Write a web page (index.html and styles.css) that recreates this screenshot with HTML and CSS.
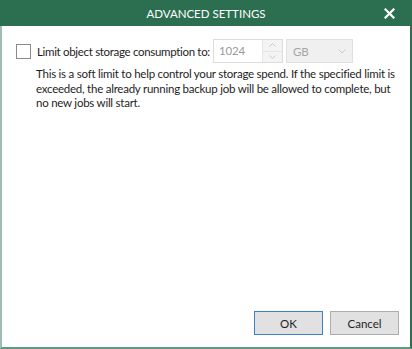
FILE: index.html
```html
<!DOCTYPE html>
<html>
<head>
<meta charset="utf-8">
<link rel="stylesheet" href="styles.css">
</head>
<body>
<div class="window">
  <div class="titlebar">
    <span class="title">ADVANCED SETTINGS</span>
    <span class="close">
      <svg width="11" height="11" viewBox="0 0 11 11"><path d="M1.5 1.5 L9.5 9.5 M9.5 1.5 L1.5 9.5" stroke="#fff" stroke-width="2.2" stroke-linecap="square"/></svg>
    </span>
  </div>
  <div class="content">
    <div class="row">
      <span class="checkbox"></span>
      <span class="label">Limit object storage consumption to:</span>
      <div class="spin">
        <span class="spin-value">1024</span>
        <span class="spin-btns">
          <span class="spin-btn"><svg width="7" height="4" viewBox="0 0 7 4"><path d="M0.5 3.5 L3.5 0.5 L6.5 3.5" fill="none" stroke="#c9c9c9" stroke-width="1"/></svg></span>
          <span class="spin-btn"><svg width="7" height="4" viewBox="0 0 7 4"><path d="M0.5 0.5 L3.5 3.5 L6.5 0.5" fill="none" stroke="#c9c9c9" stroke-width="1"/></svg></span>
        </span>
      </div>
      <div class="select">
        <span>GB</span>
        <svg width="8" height="5" viewBox="0 0 8 5"><path d="M0.5 0.5 L4 4 L7.5 0.5" fill="none" stroke="#c9c9c9" stroke-width="1"/></svg>
      </div>
    </div>
    <p class="desc">This is a soft limit to help control your storage spend. If the specified limit is exceeded, the already running backup job will be allowed to complete, but no new jobs will start.</p>
  </div>
  <div class="footer">
    <button class="btn primary">OK</button>
    <button class="btn">Cancel</button>
  </div>
</div>
</body>
</html>
```
FILE: styles.css
```css
html, body {
  margin: 0;
  padding: 0;
  background: #ffffff;
}
body {
  font-family: Lato, "Noto Sans", sans-serif;
  font-size: 11.5px;
  letter-spacing: -0.2px;
  color: #1e1e1e;
}
.window {
  width: 412px;
  height: 349px;
  box-sizing: border-box;
  border-left: 2px solid #9dbfb0;
  border-right: 2px solid #2e6f52;
  border-bottom: 2px solid #5f9980;
  display: flex;
  flex-direction: column;
  background: #fff;
}
.titlebar {
  height: 26px;
  margin-left: -2px;
  margin-right: -2px;
  background: #2b6e50;
  color: #fff;
  display: flex;
  align-items: center;
  justify-content: center;
  position: relative;
}
.title {
  font-size: 11.5px;
  letter-spacing: 0;
}
.close {
  position: absolute;
  right: 17px;
  top: 8px;
  width: 11px;
  height: 11px;
  display: flex;
}
.content {
  flex: 1;
  padding: 13px 0 0 14px;
}
.row {
  display: flex;
  align-items: center;
  height: 24px;
}
.checkbox {
  width: 13px;
  height: 13px;
  border: 1px solid #8a8a8a;
  background: #fff;
  flex: none;
}
.label {
  margin-left: 6px;
  width: 176px;
  white-space: nowrap;
  letter-spacing: -0.32px;
  flex: none;
}
.spin {
  width: 68px;
  height: 22px;
  border: 1px solid #dcdcdc;
  display: flex;
  color: #9a9a9a;
  flex: none;
}
.spin-value {
  flex: 1;
  padding-left: 5px;
  line-height: 22px;
}
.spin-btns {
  width: 19px;
  display: flex;
  flex-direction: column;
  border-left: 1px solid #e6e6e6;
  background: #f4f4f4;
}
.spin-btn {
  flex: 1;
  display: flex;
  align-items: center;
  justify-content: center;
}
.spin-btn + .spin-btn {
  border-top: 1px solid #e6e6e6;
}
.select {
  margin-left: 3px;
  width: 53px;
  height: 22px;
  border: 1px solid #e0e0e0;
  background: #f0f0f0;
  color: #a5a5a5;
  display: flex;
  align-items: center;
  justify-content: space-between;
  padding: 0 6px 0 6px;
  flex: none;
}
.desc {
  margin: 4px 0 0 20px;
  width: 368px;
  line-height: 14.5px;
  letter-spacing: -0.24px;
}
.footer {
  display: flex;
  justify-content: flex-end;
  gap: 7px;
  padding: 0 11px 12px 0;
}
.btn {
  font-family: Lato, "Noto Sans", sans-serif;
  font-size: 11.5px;
  color: #1e1e1e;
  width: 69px;
  height: 24px;
  border: 1px solid #adadad;
  background: #e1e1e1;
  padding: 0;
  margin: 0;
}
.btn.primary {
  border: 1px solid #3a82c4;
}
```
